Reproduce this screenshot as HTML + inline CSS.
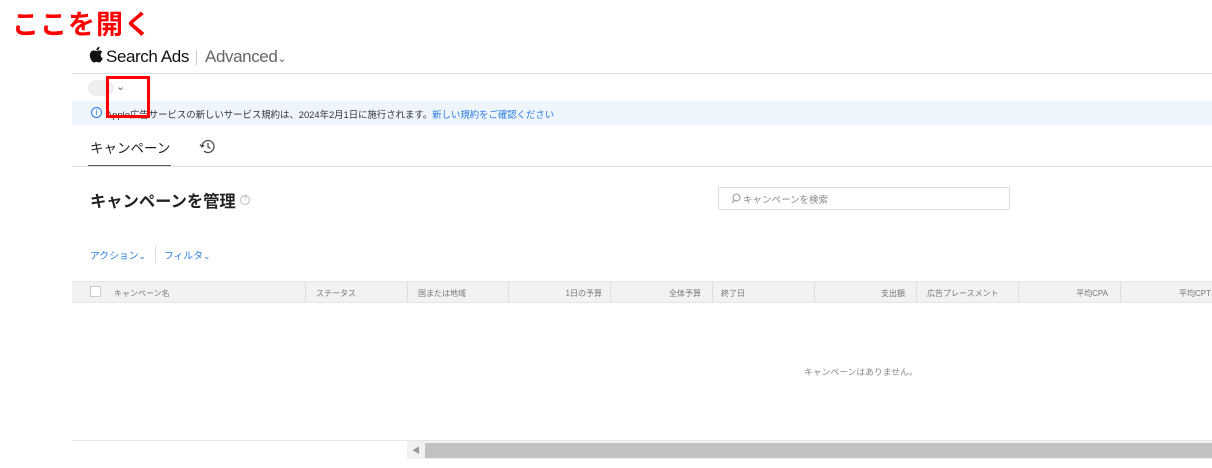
<!DOCTYPE html>
<html><head><meta charset="utf-8"><style>
*{margin:0;padding:0;box-sizing:border-box}
body{width:1212px;height:468px;background:#fff;position:relative;overflow:hidden;font-family:"Liberation Sans","Noto Sans CJK JP",sans-serif;color:#333}
.a{position:absolute;white-space:nowrap}
.d{position:absolute;top:282px;width:1px;height:20px;background:#ddd}
</style></head><body>
<div class="a" style="left:12px;top:8px;font-size:27px;font-weight:bold;color:#f00;letter-spacing:1px;line-height:34px">ここを開く</div>
<svg class="a" style="left:89px;top:46px" width="14" height="17" viewBox="0 0 14 17"><path d="M11.6 9c0-2 1.6-2.9 1.7-3-1-1.4-2.4-1.6-2.9-1.6-1.2-.1-2.4.7-3 .7s-1.6-.7-2.6-.7C3.4 4.5 2.2 5.3 1.5 6.5c-1.4 2.4-.4 6 1 8 .7 1 1.5 2 2.5 2s1.4-.6 2.6-.6 1.5.6 2.6.6 1.7-1 2.4-2c.8-1.1 1.1-2.2 1.1-2.3 0 0-2.1-.8-2.1-3.2zM9.7 3.2c.5-.7.9-1.6.8-2.5-.8 0-1.7.5-2.3 1.2-.5.6-.9 1.5-.8 2.4.9.1 1.8-.4 2.3-1.1z" fill="#111"/></svg>
<div class="a" style="left:106px;top:47px;font-size:17px;color:#111;letter-spacing:-0.4px">Search Ads</div>
<div class="a" style="left:196px;top:50px;width:1px;height:15px;background:#ccc"></div>
<div class="a" style="left:205px;top:47px;font-size:17px;color:#666;letter-spacing:-0.4px">Advanced<span style="font-size:11px">&#8964;</span></div>
<div class="a" style="left:72px;top:73px;width:1140px;height:1px;background:#e0e0e0"></div>
<div class="a" style="left:88px;top:80px;width:26px;height:16px;border-radius:8px;background:#eee"></div>
<div class="a" style="left:116px;top:80px;font-size:11px;color:#666">&#8964;</div>
<div class="a" style="left:72px;top:101px;width:1140px;height:24px;background:#eef5fd"></div>
<div class="a" style="left:91px;top:107px;width:11px;height:11px;border:1px solid #2a7de1;border-radius:50%;font-size:8px;color:#2a7de1;text-align:center;line-height:9px">i</div>
<div class="a" style="left:106px;top:107px;font-size:9.4px;color:#333">Apple広告サービスの新しいサービス規約は、2024年2月1日に施行されます。<span style="color:#2a7de1">新しい規約をご確認ください</span></div>
<div class="a" style="left:106px;top:76px;width:44px;height:42px;border:3px solid #f00"></div>
<div class="a" style="left:90px;top:137px;font-size:13.5px;color:#222">キャンペーン</div>
<svg class="a" style="left:199px;top:138px" width="18" height="17" viewBox="0 0 18 17"><path d="M3 8.5A6 6 0 1 1 5 13" fill="none" stroke="#444" stroke-width="1.2"/><path d="M1 6.5l2 2.5 2.3-2.2" fill="none" stroke="#444" stroke-width="1.2"/><path d="M9 5v4l2.5 1.5" fill="none" stroke="#444" stroke-width="1.2"/></svg>
<div class="a" style="left:88px;top:165px;width:83px;height:2px;background:#555"></div>
<div class="a" style="left:72px;top:166px;width:1140px;height:1px;background:#ddd"></div>
<div class="a" style="left:90px;top:188px;font-size:16.3px;font-weight:bold;color:#222">キャンペーンを管理</div>
<div class="a" style="left:240px;top:195px;width:10px;height:10px;border:1px solid #bbb;border-radius:50%;font-size:7px;color:#bbb;text-align:center;line-height:8px">?</div>
<div class="a" style="left:718px;top:187px;width:292px;height:23px;border:1px solid #ddd;border-radius:2px"></div>
<svg class="a" style="left:731px;top:193px" width="10" height="11" viewBox="0 0 10 11"><circle cx="5.5" cy="4.5" r="3.5" fill="none" stroke="#999"/><path d="M3.3 7.2L1 10" stroke="#999"/></svg>
<div class="a" style="left:743px;top:192px;font-size:9.5px;color:#888">キャンペーンを検索</div>
<div class="a" style="left:90px;top:248px;font-size:9.8px;color:#2a7de1">アクション<span style="font-size:9px">&#8964;</span></div>
<div class="a" style="left:155px;top:246px;width:1px;height:17px;background:#ddd"></div>
<div class="a" style="left:164px;top:248px;font-size:9.8px;color:#2a7de1">フィルタ<span style="font-size:9px">&#8964;</span></div>
<div class="a" style="left:72px;top:281px;width:1140px;height:22px;background:#f2f2f2;border-top:1px solid #e6e6e6;border-bottom:1px solid #e6e6e6"></div>
<div class="a" style="left:90px;top:286px;width:11px;height:11px;border:1px solid #ccc;background:#fff"></div>
<div style="font-size:8px;color:#777">
<div class="a" style="left:114px;top:288px">キャンペーン名</div>
<div class="a" style="left:316px;top:288px">ステータス</div>
<div class="a" style="left:418px;top:288px">国または地域</div>
<div class="a" style="left:508px;top:288px;width:94px;text-align:right">1日の予算</div>
<div class="a" style="left:610px;top:288px;width:91px;text-align:right">全体予算</div>
<div class="a" style="left:721px;top:288px">終了日</div>
<div class="a" style="left:814px;top:288px;width:91px;text-align:right">支出額</div>
<div class="a" style="left:927px;top:288px">広告プレースメント</div>
<div class="a" style="left:1018px;top:288px;width:90px;text-align:right">平均CPA</div>
<div class="a" style="left:1119px;top:288px;width:92px;text-align:right">平均CPT</div>
</div>
<div class="d" style="left:305px"></div>
<div class="d" style="left:407px"></div>
<div class="d" style="left:508px"></div>
<div class="d" style="left:610px"></div>
<div class="d" style="left:712px"></div>
<div class="d" style="left:814px"></div>
<div class="d" style="left:916px"></div>
<div class="d" style="left:1018px"></div>
<div class="d" style="left:1120px"></div>
<div class="a" style="left:804px;top:365px;font-size:8.8px;color:#888">キャンペーンはありません。</div>
<div class="a" style="left:72px;top:440px;width:1140px;height:1px;background:#e6e6e6"></div>
<div class="a" style="left:407px;top:441px;width:805px;height:18px;background:#f1f1f1"></div>
<div class="a" style="left:412px;top:445px;font-size:8px;color:#999">&#9664;</div>
<div class="a" style="left:425px;top:443px;width:787px;height:15px;background:#c1c1c1"></div>
</body></html>
